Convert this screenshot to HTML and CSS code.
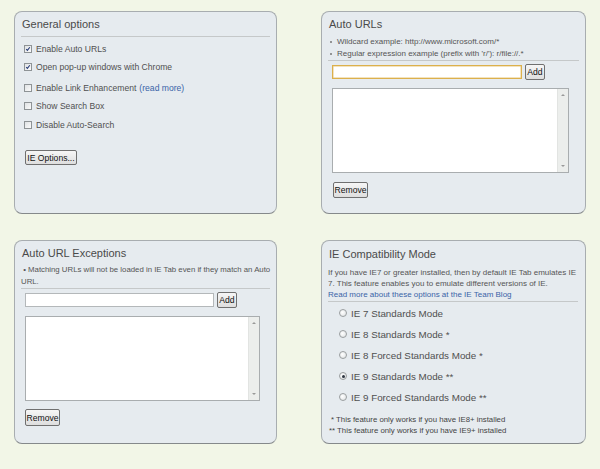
FILE: index.html
```html
<!DOCTYPE html>
<html>
<head>
<meta charset="utf-8">
<link rel="stylesheet" href="styles.css">
</head>
<body>
<div class="grid">
  <section class="panel p-general">
    <h2 class="title">General options</h2>
    <div class="rule"></div>
    <div class="opt r1"><span class="cb"><svg viewBox="0 0 8 8"><path d="M1.6 4.2 L3.2 5.9 L6.4 1.6" /></svg></span>Enable Auto URLs</div>
    <div class="opt r2"><span class="cb"><svg viewBox="0 0 8 8"><path d="M1.6 4.2 L3.2 5.9 L6.4 1.6" /></svg></span>Open pop-up windows with Chrome</div>
    <div class="opt r3"><span class="cb"></span>Enable Link Enhancement <a class="link">(read more)</a></div>
    <div class="opt r4"><span class="cb"></span>Show Search Box</div>
    <div class="opt r5"><span class="cb"></span>Disable Auto-Search</div>
    <button class="btn ieopt">IE Options...</button>
  </section>

  <section class="panel p-auto">
    <h2 class="title">Auto URLs</h2>
    <ul class="bullets">
      <li>Wildcard example: http://www.microsoft.com/*</li>
      <li>Regular expression example (prefix with 'r/'): r/file://.*</li>
    </ul>
    <div class="rule"></div>
    <div class="addrow">
      <div class="field focus"></div>
      <button class="btn add">Add</button>
    </div>
    <div class="listbox"><div class="lb-body"></div><div class="sb"><span class="up"></span><span class="dn"></span></div></div>
    <button class="btn remove">Remove</button>
  </section>

  <section class="panel p-exc">
    <h2 class="title">Auto URL Exceptions</h2>
    <p class="note">&nbsp;• Matching URLs will not be loaded in IE Tab even if they match an Auto URL.</p>
    <div class="rule"></div>
    <div class="addrow">
      <div class="field"></div>
      <button class="btn add">Add</button>
    </div>
    <div class="listbox"><div class="lb-body"></div><div class="sb"><span class="up"></span><span class="dn"></span></div></div>
    <button class="btn remove">Remove</button>
  </section>

  <section class="panel p-compat">
    <h2 class="title">IE Compatibility Mode</h2>
    <p class="desc">If you have IE7 or greater installed, then by default IE Tab emulates IE 7. This feature enables you to emulate different versions of IE.<br><a class="link">Read more about these options at the IE Team Blog</a></p>
    <div class="rule"></div>
    <div class="radios">
      <div class="radio"><span class="rb"></span>IE 7 Standards Mode</div>
      <div class="radio"><span class="rb"></span>IE 8 Standards Mode *</div>
      <div class="radio"><span class="rb"></span>IE 8 Forced Standards Mode *</div>
      <div class="radio"><span class="rb on"></span>IE 9 Standards Mode **</div>
      <div class="radio"><span class="rb"></span>IE 9 Forced Standards Mode **</div>
    </div>
    <p class="foot"><span class="f1">* This feature only works if you have IE8+ installed</span><br>** This feature only works if you have IE9+ installed</p>
  </section>
</div>
</body>
</html>
```

FILE: styles.css
```css
html, body {
  margin: 0;
  padding: 0;
}
body {
  background: #f2f6e7;
  font-family: "Liberation Sans", Arial, sans-serif;
  color: #555;
  width: 600px;
  height: 469px;
  overflow: hidden;
}
.grid {
  display: grid;
  grid-template-columns: 263px 265px;
  grid-template-rows: 203px 204px;
  column-gap: 44px;
  row-gap: 26px;
  padding: 11px 0 0 14px;
}
.panel {
  box-sizing: border-box;
  background: #e6ebef;
  border: 1px solid #a8adb0;
  border-bottom-color: #85898b;
  border-radius: 8px;
  padding: 5px 6px 0 6px;
  display: flex;
  flex-direction: column;
  align-items: flex-start;
}
.title {
  margin: 0;
  padding-left: 1px;
  font-size: 11px;
  line-height: 14px;
  font-weight: normal;
  color: #4a4a4a;
}
.rule {
  align-self: stretch;
  height: 0;
  border-top: 1px solid #c5c8c9;
}
.p-general .rule { margin-top: 5px; }

.opt {
  display: flex;
  align-items: center;
  font-size: 8.6px;
  line-height: 12px;
  height: 12px;
  padding-left: 3px;
  color: #505050;
  white-space: nowrap;
}
.r1 { margin-top: 6px; }
.r2 { margin-top: 6px; }
.r3 { margin-top: 9px; }
.r4 { margin-top: 6px; }
.r5 { margin-top: 7px; }

.cb {
  box-sizing: border-box;
  width: 8px;
  height: 8px;
  border: 1px solid #8e9396;
  background: linear-gradient(135deg, #dfe2e4, #fbfbfb);
  margin-right: 4px;
  display: inline-flex;
  flex: none;
}
.cb svg {
  width: 6px;
  height: 6px;
}
.cb svg path {
  fill: none;
  stroke: #283c78;
  stroke-width: 1.4;
}
.link {
  color: #3a64a8;
}
.opt .link { margin-left: 3px; }

.btn {
  box-sizing: border-box;
  font-family: "Liberation Sans", Arial, sans-serif;
  font-size: 8.6px;
  color: #111;
  height: 16px;
  padding: 0 2px;
  border: 1px solid #707070;
  border-radius: 2px;
  background: linear-gradient(#f6f6f6, #dedede);
  line-height: 14px;
  margin: 0;
  white-space: nowrap;
}
.ieopt {
  margin-top: 19px;
  margin-left: 4px;
  width: 52px;
  height: 15px;
  padding: 0;
}

.bullets {
  list-style: none;
  margin: 5px 0 0 0;
  padding: 0;
  font-size: 8px;
  line-height: 12px;
  color: #555;
}
.bullets li {
  position: relative;
  padding-left: 9px;
}
.bullets li::before {
  content: "";
  position: absolute;
  left: 2px;
  top: 5px;
  width: 2px;
  height: 2px;
  border-radius: 1px;
  background: #777;
}

.addrow {
  display: flex;
  align-items: center;
  gap: 3px;
  margin-top: 3px;
  margin-left: 4px;
  height: 16px;
}
.field {
  box-sizing: border-box;
  width: 190px;
  height: 14px;
  background: #fff;
  border: 1px solid #b4b8ba;
}
.field.focus {
  border: 1px solid #dcb04c;
  box-shadow: inset 0 0 0 0.5px #e8c880;
}
.p-exc .field { width: 189px; }
.add {
  width: 20px;
  padding: 0;
  text-align: center;
}

.listbox {
  box-sizing: border-box;
  margin-top: 8px;
  margin-left: 4px;
  width: 237px;
  height: 85px;
  border: 1px solid #a9adaf;
  background: #fff;
  display: flex;
}
.p-exc .listbox { width: 235px; }
.lb-body { flex: 1; }
.sb {
  width: 10px;
  background: #eceeec;
  border-left: 1px solid #e2e4e2;
  display: flex;
  flex-direction: column;
  justify-content: space-between;
  align-items: center;
  padding: 5px 0 5px;
}
.sb .up {
  width: 0; height: 0;
  border-left: 2px solid transparent;
  border-right: 2px solid transparent;
  border-bottom: 2px solid #999;
}
.sb .dn {
  width: 0; height: 0;
  border-left: 2px solid transparent;
  border-right: 2px solid transparent;
  border-top: 2px solid #999;
}
.remove {
  margin-top: 9px;
  margin-left: 5px;
  width: 35px;
  padding: 0;
}
.p-exc { padding-right: 4px; }
.p-exc .rule { margin-right: 2px; }
.p-exc .remove { margin-left: 4px; margin-top: 8px; height: 17px; }

.note {
  margin: 4px 0 0 0;
  font-size: 7.8px;
  line-height: 12px;
  color: #555;
}

.p-compat { padding-top: 6px; padding-right: 7px; }
.desc {
  margin: 6px 0 0 0;
  max-width: 249px;
  font-size: 8px;
  line-height: 11px;
  color: #555;
}
.p-compat .rule { margin-top: 1px; }
.radios {
  display: flex;
  flex-direction: column;
  gap: 9px;
  margin-top: 5px;
  padding-left: 11px;
}
.radio {
  display: flex;
  align-items: center;
  height: 12px;
  font-size: 9.8px;
  color: #505050;
  white-space: nowrap;
}
.rb {
  box-sizing: border-box;
  width: 8px;
  height: 8px;
  border-radius: 50%;
  border: 1px solid #9a9ea0;
  background: radial-gradient(circle at 40% 40%, #fff, #dcdfe0);
  margin-right: 4px;
  position: relative;
  flex: none;
}
.rb.on::after {
  content: "";
  position: absolute;
  left: 1.5px;
  top: 1.5px;
  width: 3px;
  height: 3px;
  border-radius: 50%;
  background: #2c3440;
}
.foot {
  margin: 11px 0 0 1px;
  font-size: 7.8px;
  line-height: 11px;
  color: #444;
}
.foot .f1 { padding-left: 2px; }
```
